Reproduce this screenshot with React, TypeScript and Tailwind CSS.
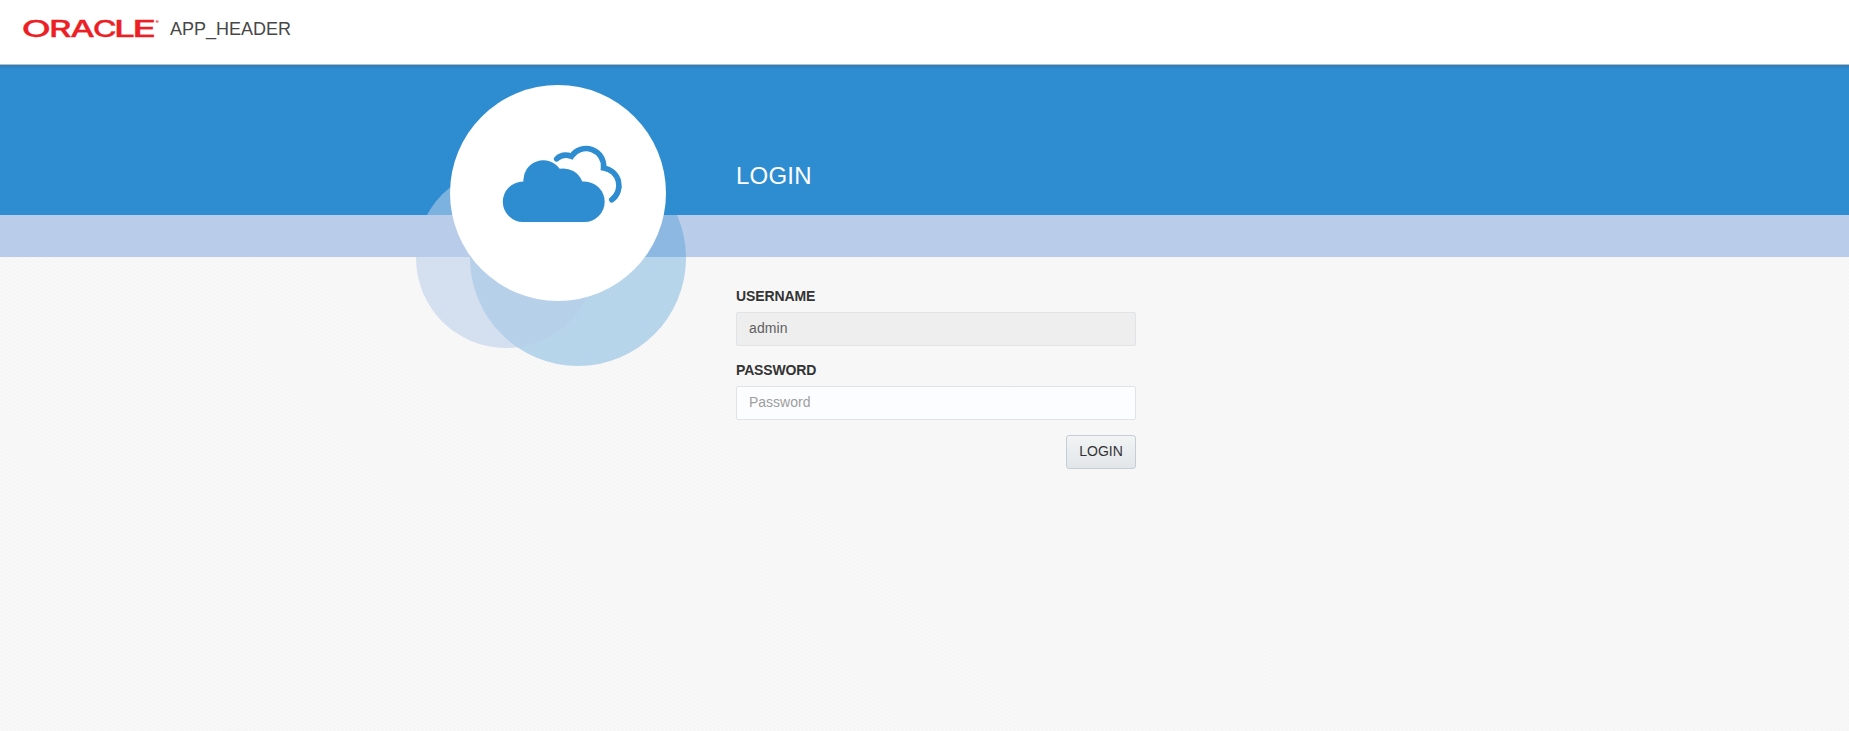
import React from "react";

function OracleLogo() {
  return (
    <svg width="145" height="38" viewBox="-3 -10 145 38" className="-mt-[10px] -mr-[4px] -ml-[3px] block" aria-label="Oracle">
      <g fill="#ec2024" stroke="#ec2024" strokeWidth="0.300" fontFamily="Inter, sans-serif" fontWeight="500" fontSize="22.800">
        <text x="-1.500" y="18.700" textLength="29.500" lengthAdjust="spacingAndGlyphs">O</text>
        <text x="26" y="18.700" textLength="22.500" lengthAdjust="spacingAndGlyphs">R</text>
        <text x="47.300" y="18.700" textLength="24.500" lengthAdjust="spacingAndGlyphs">A</text>
        <text x="69.700" y="18.700" textLength="24" lengthAdjust="spacingAndGlyphs">C</text>
        <text x="91" y="18.700" textLength="21" lengthAdjust="spacingAndGlyphs">L</text>
        <text x="109.300" y="18.700" textLength="24" lengthAdjust="spacingAndGlyphs">E</text>
      </g>
      <text x="132.500" y="5.500" fontSize="5" fontFamily="Inter, sans-serif" fontWeight="600" fill="#ec2024">®</text>
    </svg>
  );
}

function CloudIcon() {
  return (
    <svg width="126" height="80" viewBox="500 143 126 80" className="block shrink-0">
      <path
        fill="#2e8dd1"
        d="M523 222a20.200 20.200 0 0 1 0-40.400h.4A20 20 0 0 1 559.700 168.700A20.500 20.500 0 0 1 582.300 181.600H584.500a20.200 20.200 0 0 1 0 40.400Z"
      />
      <path
        fill="none"
        stroke="#2e8dd1"
        strokeWidth="5.600"
        strokeLinecap="round"
        d="M556.700 158.900C560.500 155 566 154.300 571.500 156.300A17.600 17.600 0 0 1 603.600 167.900A17.800 17.800 0 0 1 611.800 199.800"
      />
    </svg>
  );
}

export default function App() {
  return (
    <div className="flex h-[731px] flex-col overflow-hidden bg-[#f8f8f8] bg-[repeating-linear-gradient(45deg,#f4f4f4_0px,#fafafa_1.414px,#f4f4f4_2.828px)] font-['Liberation_Sans',sans-serif]">
      <header className="flex h-[65px] shrink-0 items-start border-b border-[#bcbcbc] bg-white pt-[18px] pl-[23px]">
        <OracleLogo />
        <h1 className="ml-[9px] text-[18px] leading-[22px] text-[#474747]">APP_HEADER</h1>
      </header>
      <section className="relative h-[150px] shrink-0 bg-[#2e8dd1] bg-linear-to-b from-[#297fbc] from-0% to-[#2e8dd1] to-[5px] pt-[94px] pl-[736px]">
        <h2 className="text-2xl leading-[34px] tracking-[0.2px] text-white">LOGIN</h2>
        <div className="absolute top-[85px] left-[470px] z-10 size-[216px] rounded-full bg-[#2e8dd1]/32" />
        <div className="absolute top-[103px] left-[416px] z-10 size-[180px] rounded-full bg-[#b9cdea]/57" />
        <div className="absolute top-[20px] left-[450px] z-10 flex size-[216px] rounded-full bg-white pt-[58px] pl-[50px]">
          <CloudIcon />
        </div>
      </section>
      <div className="h-[42px] shrink-0 bg-[#b9cdea]" />
      <form className="ml-[736px] flex w-[400px] flex-col pt-[29px]" onSubmit={(e) => e.preventDefault()}>
        <label className="text-sm leading-5 font-bold tracking-[-0.1px] text-[#333333]" htmlFor="user">USERNAME</label>
        <input
          id="user"
          readOnly
          value="admin"
          className="mt-[6px] h-[34px] rounded-[2px] border border-[#dfe4e7] bg-[#eeeeee] px-3 pb-[2px] text-sm tracking-[0.1px] text-[#5f5f5f] outline-none"
        />
        <label className="mt-[14px] text-sm leading-5 font-bold tracking-[-0.15px] text-[#333333]" htmlFor="pass">PASSWORD</label>
        <input
          id="pass"
          type="password"
          placeholder="Password"
          className="mt-[6px] h-[34px] rounded-[2px] border border-[#dfe4e7] bg-[#fcfdfe] px-3 pb-[2px] text-sm outline-none placeholder:text-[#9e9e9e]"
        />
        <button className="mt-[15px] h-[34px] w-[70px] self-end rounded-[3px] border border-[#c4ced7] bg-linear-to-b from-[#f2f4f5] to-[#e2e6e9] pb-[2px] text-sm text-[#333333]">
          LOGIN
        </button>
      </form>
    </div>
  );
}
